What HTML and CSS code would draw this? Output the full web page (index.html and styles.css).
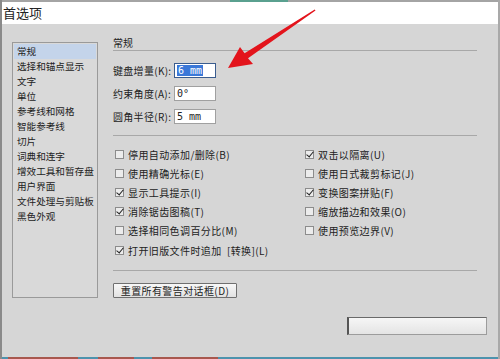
FILE: index.html
```html
<!DOCTYPE html>
<html lang="zh-CN">
<head>
  <meta charset="UTF-8" />
  <title>首选项</title>
  <link rel="stylesheet" href="styles.css">
</head>
<body>
  <div class="window">
    <div class="topline"><span class="accent"></span></div>
    <div class="titlebar">首选项</div>

    <div class="dialog">
      <!-- category list -->
      <ul class="nav">
        <li class="active">常规</li>
        <li>选择和锚点显示</li>
        <li>文字</li>
        <li>单位</li>
        <li>参考线和网格</li>
        <li>智能参考线</li>
        <li>切片</li>
        <li>词典和连字</li>
        <li>增效工具和暂存盘</li>
        <li>用户界面</li>
        <li>文件处理与剪贴板</li>
        <li>黑色外观</li>
      </ul>

      <!-- general settings -->
      <div class="panel">
        <div class="section-title">常规</div>

        <div class="fields">
          <div class="field">
            <label>键盘增量(K):</label>
            <div class="input focused"><span class="sel">6 mm</span></div>
          </div>
          <div class="field">
            <label>约束角度(A):</label>
            <div class="input">0°</div>
          </div>
          <div class="field">
            <label>圆角半径(R):</label>
            <div class="input">5 mm</div>
          </div>
        </div>

        <div class="checks">
          <div class="check"><span class="box"></span>停用自动添加/删除(B)</div>
          <div class="check"><span class="box"></span>使用精确光标(E)</div>
          <div class="check"><span class="box checked"></span>显示工具提示(I)</div>
          <div class="check"><span class="box checked"></span>消除锯齿图稿(T)</div>
          <div class="check"><span class="box"></span>选择相同色调百分比(M)</div>
          <div class="check"><span class="box checked"></span>打开旧版文件时追加&nbsp;&nbsp;[转换](L)</div>
          <div class="check"><span class="box checked"></span>双击以隔离(U)</div>
          <div class="check"><span class="box"></span>使用日式裁剪标记(J)</div>
          <div class="check"><span class="box checked"></span>变换图案拼贴(F)</div>
          <div class="check"><span class="box"></span>缩放描边和效果(O)</div>
          <div class="check"><span class="box"></span>使用预览边界(V)</div>
        </div>

        <button class="reset">重置所有警告对话框(D)</button>

        <div class="footer">
          <div class="progress"></div>
        </div>
      </div>
    </div>

    <div class="taskbar">
      <span class="task t1"></span>
      <span class="task t2"></span>
      <span class="task t3"></span>
    </div>

    <!-- red annotation arrow -->
    <svg class="arrow" width="500" height="359" viewBox="0 0 500 359">
      <polygon points="226,68 238,47 242.6,53.3 312.7,9.4 313.5,10.6 246,58.3 251,64" fill="#e3141c" />
    </svg>
  </div>
</body>
</html>
```

FILE: styles.css
```css
* {
  box-sizing: border-box;
}

body {
  margin: 0;
  font-family: 'Noto Sans CJK SC', 'Noto Sans', sans-serif;
  font-size: 10px;
  color: #222;
}

.window {
  position: relative;
  width: 500px;
  height: 359px;
  overflow: hidden;
  background: #d6d6d6;
  border-left: 2px solid #8a8a8a;
  border-right: 2px solid #a9a9a9;
  display: flex;
  flex-direction: column;
}

.topline {
  height: 2px;
  background: #a4a4a4;
  position: relative;
}

.topline .accent {
  position: absolute;
  left: 228px;
  width: 58px;
  top: 0;
  height: 2px;
  background: #5aa08f;
}

.titlebar {
  height: 22px;
  background: #fff;
  font-size: 13px;
  line-height: 22px;
  padding-left: 1px;
  color: #222;
}

.dialog {
  flex: 1;
  display: flex;
  padding: 13px 0 0 10px;
}

.nav {
  list-style: none;
  margin: 5px 0 0 0;
  padding: 1px;
  width: 86px;
  height: 256px;
  border: 1px solid #9a9a9a;
  background: #d9d9d9;
}

.nav li {
  height: 15px;
  line-height: 15px;
  padding-left: 3px;
  font-size: 9.6px;
  white-space: nowrap;
}

.nav li.active {
  background: #c4d4ea;
}

.panel {
  margin-left: 15px;
  width: 374px;
}

.section-title {
  height: 14px;
  line-height: 12px;
  margin-right: 10px;
  border-bottom: 1px solid #a8a8a8;
}

.fields {
  padding: 12px 0 11px;
  margin-right: 10px;
  border-bottom: 1px solid #a8a8a8;
  display: flex;
  flex-direction: column;
  gap: 8px;
}

.field {
  display: flex;
  align-items: center;
  height: 15px;
}

.field label {
  width: 61px;
  letter-spacing: 0.3px;
}

.input {
  width: 42px;
  height: 15px;
  background: #fff;
  border: 1px solid #a0a0a0;
  font-family: 'DejaVu Sans Mono', monospace;
  font-size: 10px;
  line-height: 13px;
  padding-left: 2px;
}

.input.focused {
  border-color: #3a5c8e;
}

.sel {
  background: #3b78d8;
  color: #fff;
  padding: 0 1px;
}

.checks {
  display: grid;
  grid-auto-flow: column;
  grid-template-rows: repeat(5, 19px) 20px;
  grid-template-columns: 190px 1fr;
  padding: 9px 0 10px 2px;
  margin-right: 10px;
  border-bottom: 1px solid #a8a8a8;
}

.check {
  display: flex;
  align-items: center;
  gap: 4px;
  letter-spacing: 0.4px;
  white-space: nowrap;
}

.box {
  width: 9px;
  height: 9px;
  border: 1px solid #8c8c8c;
  background: #ececec;
  position: relative;
}

.box.checked::after {
  content: '';
  position: absolute;
  left: 2px;
  top: -1px;
  width: 3px;
  height: 6px;
  border: solid #222;
  border-width: 0 1.5px 1.5px 0;
  transform: rotate(40deg);
}

.reset {
  margin-top: 12px;
  width: 124px;
  height: 15px;
  padding: 0;
  font-family: inherit;
  font-size: 10px;
  line-height: 13px;
  letter-spacing: 0.4px;
  color: #222;
  background: linear-gradient(#f7f7f7, #e2e2e2);
  border: 1px solid #6f6f6f;
  border-radius: 1px;
}

.footer {
  display: flex;
  justify-content: flex-end;
  margin-top: 19px;
}

.progress {
  width: 140px;
  height: 18px;
  background: linear-gradient(#f6f6f6, #e4e4e4);
  border: 1px solid #9c9c9c;
  border-left: 2px solid #555;
  border-top-color: #6a6a6a;
}

.taskbar {
  position: absolute;
  left: 0;
  right: 0;
  bottom: 0;
  height: 2px;
  background: #4d93ad;
}

.task {
  position: absolute;
  top: 0;
  height: 2px;
  background: #a8584e;
}

.t1 { left: 6px; width: 70px; }
.t2 { left: 96px; width: 36px; }
.t3 { left: 150px; width: 66px; }

.arrow {
  position: absolute;
  left: 0;
  top: 0;
  pointer-events: none;
}
```
